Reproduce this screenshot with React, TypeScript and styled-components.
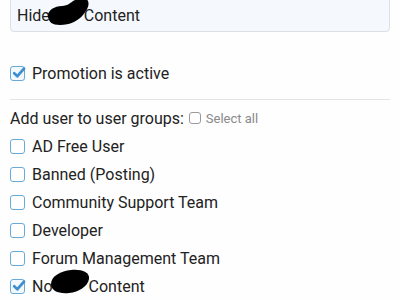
import React from "react";
import styled, { createGlobalStyle } from "styled-components";

const GlobalStyle = createGlobalStyle`
    body {
        margin: 0;
        background: #fefefe;
        font-family: Roboto, "Liberation Sans", sans-serif;
        color: #222222;
    }
`

const Page = styled.div`
    width: 380px;
    padding: 0 10px;
    overflow: hidden;
    height: 300px;
`

const Input = styled.div`
    margin-top: -4px;
    height: 36px;
    box-sizing: border-box;
    background: #f5f9fd;
    border: 1px solid #dcdfe3;
    border-radius: 4px;
    display: flex;
    align-items: center;
    padding: 2px 6px 0;
    font-size: 16px;
    white-space: nowrap;
`

const Redacted = styled.span<{ $w: number }>`
    position: relative;
    display: inline-block;
    width: ${(p) => p.$w}px;
    height: 1em;

    svg {
        position: absolute;
        left: -4px;
        top: -10px;
    }
`

const Row = styled.label<{ $gap?: number }>`
    display: flex;
    align-items: center;
    height: 28px;
    font-size: 16px;
    margin-top: ${(p) => p.$gap ?? 0}px;
    white-space: nowrap;
`

const Box = styled.span<{ $checked?: boolean; $muted?: boolean; $size?: number }>`
    width: ${(p) => p.$size ?? 15}px;
    height: ${(p) => p.$size ?? 15}px;
    box-sizing: border-box;
    border: 1.5px solid ${(p) => (p.$muted ? "#9a9a9a" : "#68aad8")};
    border-radius: 3px;
    background: ${(p) => (p.$checked ? "#f3f8fc" : "#fff")};
    margin-right: ${(p) => (p.$muted ? 5 : 7)}px;
    display: inline-flex;
    align-items: center;
    justify-content: center;
    flex-shrink: 0;
    position: relative;

    svg {
        position: absolute;
        left: 1px;
        top: -1px;
    }
`

const Divider = styled.div`
    height: 1px;
    background: #e4e4e4;
    margin: 12px 0 4px;
`

const Heading = styled.div`
    display: flex;
    align-items: center;
    height: 28px;
    font-size: 16px;
    white-space: nowrap;
`

const SelectAll = styled.span`
    display: inline-flex;
    align-items: center;
    margin-left: 5px;
    font-size: 13px;
    color: #8a8a8a;
`

const Check = () => (
    <svg width="14" height="14" viewBox="0 0 14 14">
        <path d="M2.2 7.2 L5.4 10.2 L12 2.6" fill="none" stroke="#3f8fd0" strokeWidth="2.8" strokeLinecap="round" strokeLinejoin="round" />
    </svg>
)

const Item: React.FC<{ label: React.ReactNode; checked?: boolean }> = ({ label, checked }) => (
    <Row>
        <Box $checked={checked}>{checked && <Check />}</Box>
        <span>{label}</span>
    </Row>
)

const groups = ["AD Free User", "Banned (Posting)", "Community Support Team", "Developer", "Forum Management Team"]

export default function App() {
    return (
        <>
            <GlobalStyle />
            <Page>
                <Input>
                    Hide
                    <Redacted $w={34}>
                        <svg width="44" height="30" viewBox="0 0 44 30">
                            <path d="M2 20 C1 14 8 9 16 9 C22 9 25 5 29 3 C33 1 40 0 42 4 C44 9 40 14 37 18 C32 24 24 28 14 28 C6 28 3 25 2 20 Z" fill="#000" />
                        </svg>
                    </Redacted>
                    Content
                </Input>
                <Row $gap={27}>
                    <Box $checked><Check /></Box>
                    <span>Promotion is active</span>
                </Row>
                <Divider />
                <Heading>
                    Add user to user groups:
                    <SelectAll>
                        <Box $muted $size={12} />
                        Select all
                    </SelectAll>
                </Heading>
                {groups.map((g) => (
                    <Item key={g} label={g} />
                ))}
                <Item
                    checked
                    label={
                        <>
                            No
                            <Redacted $w={36}>
                                <svg width="44" height="30" viewBox="0 0 44 30">
                                    <path d="M2 18 C2 10 12 5 22 4 C32 3 41 6 40 13 C39 20 30 26 20 27 C10 28 2 25 2 18 Z" fill="#000" />
                                </svg>
                            </Redacted>
                            Content
                        </>
                    }
                />
            </Page>
        </>
    )
}
